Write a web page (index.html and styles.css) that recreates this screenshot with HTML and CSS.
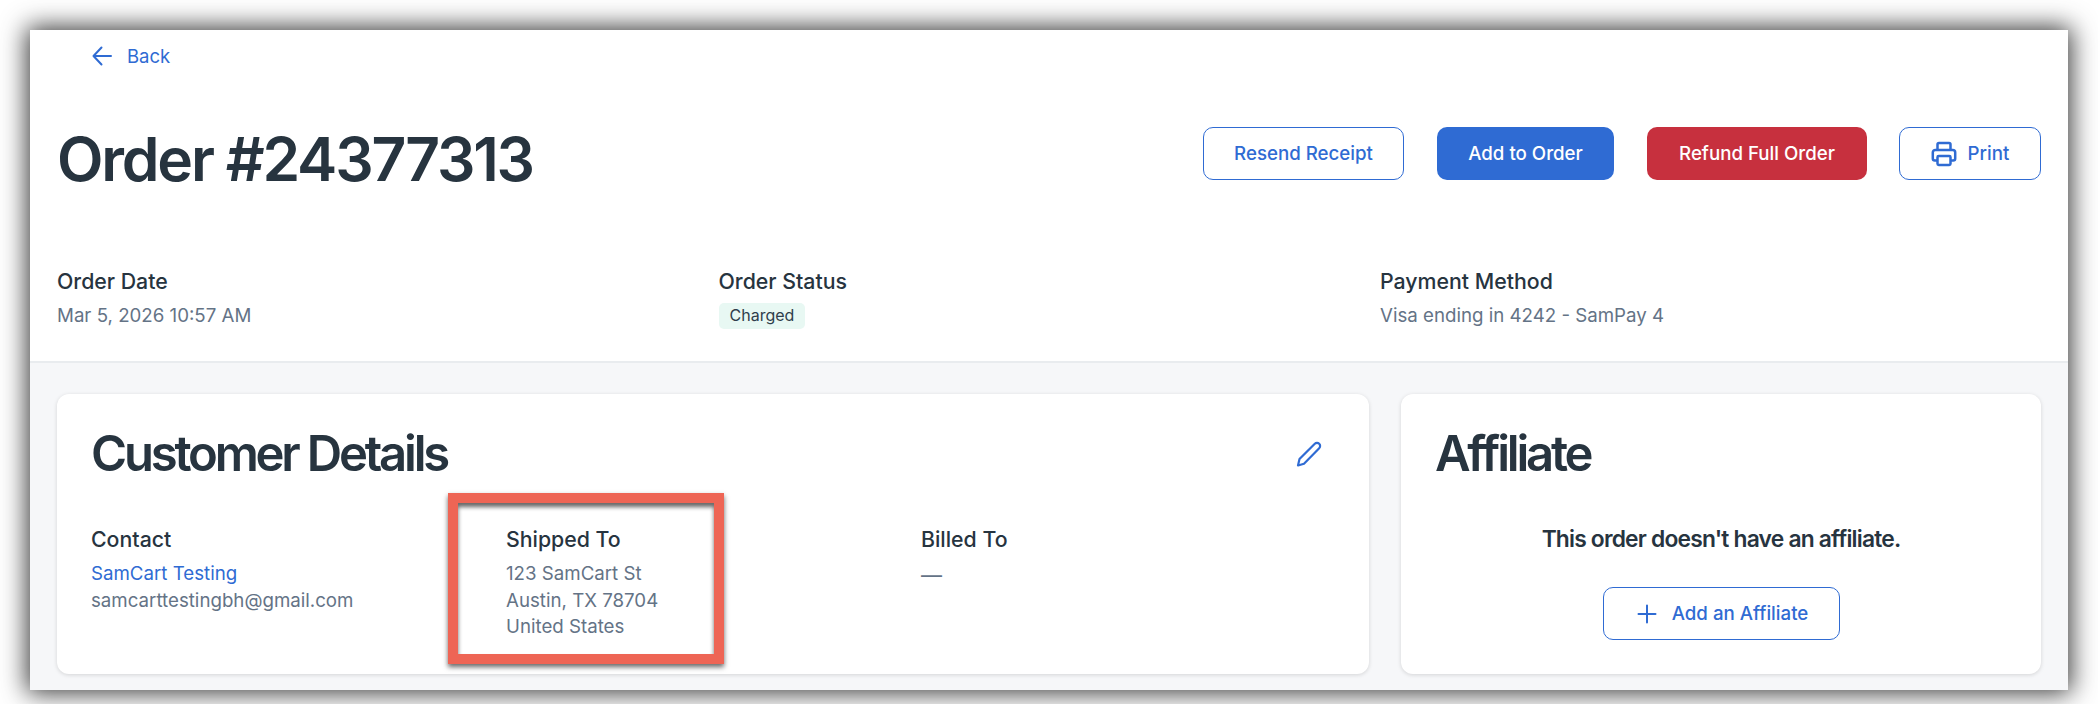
FILE: index.html
```html
<!DOCTYPE html>
<html lang="en">
<head>
    <meta charset="UTF-8">
    <meta name="viewport" content="width=device-width, initial-scale=1.0">
    <title>Order #24377313</title>
    <link rel="stylesheet" href="styles.css">
</head>
<body>
    <div class="window">
        <div class="top">
            <a class="back" href="#">
                <svg width="22" height="22" viewBox="0 0 22 22" fill="none" stroke="currentColor" stroke-width="2" stroke-linecap="round" stroke-linejoin="round"><path d="M20 11H2.500M10.500 2.500 2.500 11l8 8.500"/></svg>
                <span>Back</span>
            </a>
            <div class="header">
                <h1>Order #24377313</h1>
                <div class="actions">
                    <button class="btn btn-outline resend">Resend Receipt</button>
                    <button class="btn btn-blue add">Add to Order</button>
                    <button class="btn btn-red refund">Refund Full Order</button>
                    <button class="btn btn-outline print">
                        <svg width="26" height="26" viewBox="0 0 26 26" fill="none" stroke="currentColor" stroke-width="2.500" stroke-linejoin="round"><path d="M6.500 19.500H3.800A2 2 0 0 1 1.800 17.500V11.500A2.500 2.500 0 0 1 4.300 9H21.700A2.500 2.500 0 0 1 24.200 11.500V17.500A2 2 0 0 1 22.200 19.500H19.500"/><path d="M6.500 9V3.500A1.500 1.500 0 0 1 8 2H18A1.500 1.500 0 0 1 19.500 3.500V9"/><rect x="6.500" y="15" width="13" height="9" rx="1.200"/></svg>
                        <span>Print</span>
                    </button>
                </div>
            </div>
            <div class="meta">
                <div>
                    <p class="label">Order Date</p>
                    <p class="value">Mar 5, 2026 10:57 AM</p>
                </div>
                <div>
                    <p class="label">Order Status</p>
                    <span class="badge">Charged</span>
                </div>
                <div>
                    <p class="label">Payment Method</p>
                    <p class="value">Visa ending in 4242 - SamPay 4</p>
                </div>
            </div>
        </div>
        <div class="bottom">
            <section class="card customer">
                <div class="card-head">
                    <h2>Customer Details</h2>
                    <svg class="edit" width="26" height="26" viewBox="0 0 26 26" fill="none" stroke="currentColor" stroke-width="2.200" stroke-linejoin="round" stroke-linecap="round"><path d="M2 24.500 3.500 18 18.800 2.800a3 3 0 0 1 4.400 4.400L8 22.800z"/></svg>
                </div>
                <div class="columns">
                    <div>
                        <p class="label">Contact</p>
                        <a class="link" href="#">SamCart Testing</a>
                        <p class="line">samcarttestingbh@gmail.com</p>
                    </div>
                    <div>
                        <p class="label">Shipped To</p>
                        <p class="line">123 SamCart St</p>
                        <p class="line">Austin, TX 78704</p>
                        <p class="line">United States</p>
                    </div>
                    <div>
                        <p class="label">Billed To</p>
                        <p class="line dash">—</p>
                    </div>
                </div>
                <div class="highlight"></div>
            </section>
            <section class="card affiliate">
                <h2>Affiliate</h2>
                <p class="empty">This order doesn't have an affiliate.</p>
                <button class="btn btn-outline add-affiliate">
                    <svg width="20" height="20" viewBox="0 0 20 20" fill="none" stroke="currentColor" stroke-width="2" stroke-linecap="round"><path d="M10 1.500V18.500M1.500 10H18.500"/></svg>
                    <span>Add an Affiliate</span>
                </button>
            </section>
        </div>
    </div>
</body>
</html>
```

FILE: styles.css
```css
* {
    box-sizing: border-box;
}
html, body {
    height: 100%;
}
body {
    margin: 0;
    padding: 30px 30px 14px;
    background: #fff;
    font-family: Inter, "Liberation Sans", sans-serif;
    color: #27343f;
    overflow: hidden;
}
p, h1, h2 {
    margin: 0;
}
.window {
    height: 660px;
    display: flex;
    flex-direction: column;
    background: #fff;
    box-shadow: 0 0 24px 3px rgba(0, 0, 0, 0.78);
}
.top {
    height: 333px;
    padding: 0 27px;
    border-bottom: 2px solid #e9ecef;
}
.back {
    display: inline-flex;
    align-items: center;
    gap: 14px;
    margin: 12.500px 0 0 34px;
    height: 27px;
    font-size: 18.500px;
    color: #2f6bd3;
    text-decoration: none;
}
.header {
    display: flex;
    justify-content: space-between;
    align-items: center;
    margin-top: 49.500px;
}
h1 {
    padding-top: 2px;
    font-size: 60.500px;
    font-weight: 600;
    line-height: 72px;
    letter-spacing: -2.200px;
    color: #27343f;
}
.actions {
    display: flex;
    gap: 33px;
    margin-top: -8px;
}
.btn {
    height: 53px;
    display: inline-flex;
    align-items: center;
    justify-content: center;
    gap: 10px;
    border-radius: 10px;
    font-family: inherit;
    font-size: 18.700px;
    font-weight: 500;
    cursor: pointer;
}
.btn-outline {
    background: #fff;
    border: 1.500px solid #2f6bd3;
    color: #2f6bd3;
}
.btn-blue {
    background: #2f6bd3;
    border: none;
    color: #fff;
}
.btn-red {
    background: #c7303e;
    border: none;
    color: #fff;
}
.resend { width: 201px; }
.add { width: 177px; }
.refund { width: 220px; }
.print {
    width: 142px;
    margin-left: -1px;
    gap: 11px;
}
.meta {
    display: grid;
    grid-template-columns: repeat(3, 661.500px);
    margin-top: 73px;
}
.label {
    font-size: 21.300px;
    font-weight: 450;
    line-height: 26px;
    color: #27343f;
}
.value {
    margin-top: 9px;
    font-size: 18.700px;
    line-height: 26px;
    color: #647386;
}
.badge {
    display: inline-block;
    margin-top: 9px;
    padding: 0 11px;
    height: 26px;
    line-height: 25px;
    border-radius: 5px;
    background: #e8f8f3;
    font-size: 16px;
    color: #2f3e4c;
}
.bottom {
    flex: 1;
    display: flex;
    gap: 32px;
    padding: 31px 27px 16px;
    background: #f6f7f9;
}
.card {
    position: relative;
    height: 280px;
    background: #fff;
    border-radius: 12px;
    box-shadow: 0 1px 4px rgba(0, 0, 0, 0.14);
}
.customer {
    width: 1312px;
    padding: 33px 34px;
}
.card-head {
    display: flex;
    justify-content: space-between;
    align-items: center;
}
h2 {
    font-size: 49px;
    font-weight: 600;
    line-height: 54px;
    letter-spacing: -3.200px;
    color: #27343f;
}
.edit {
    color: #2f6bd3;
    margin-right: 13px;
}
.columns {
    display: grid;
    grid-template-columns: repeat(3, 415px);
    margin-top: 45px;
}
.columns .label {
    margin-bottom: 9px;
}
.link {
    display: block;
    font-size: 18.700px;
    line-height: 26.600px;
    color: #2f6bd3;
    text-decoration: none;
}
.line {
    font-size: 18.700px;
    line-height: 26.600px;
    color: #647386;
}
.dash {
    font-size: 21px;
    line-height: 30px;
}
/* annotation box drawn over the screenshot */
.highlight {
    position: absolute;
    left: 391px;
    top: 99px;
    width: 276px;
    height: 171px;
    border: 10.500px solid #ee6555;
    box-shadow: 0 3px 5px rgba(0, 0, 0, 0.6), inset 0 4px 4px rgba(0, 0, 0, 0.6);
}
.affiliate {
    width: 640px;
    padding: 33px 34px;
    display: flex;
    flex-direction: column;
}
.affiliate h2 {
    align-self: flex-start;
}
.empty {
    margin-top: 42px;
    text-align: center;
    font-size: 22.800px;
    font-weight: 600;
    line-height: 32px;
    letter-spacing: -0.800px;
    color: #27343f;
}
.add-affiliate {
    align-self: center;
    width: 237px;
    margin-top: 32px;
    padding-left: 9px;
    gap: 15px;
}
```
